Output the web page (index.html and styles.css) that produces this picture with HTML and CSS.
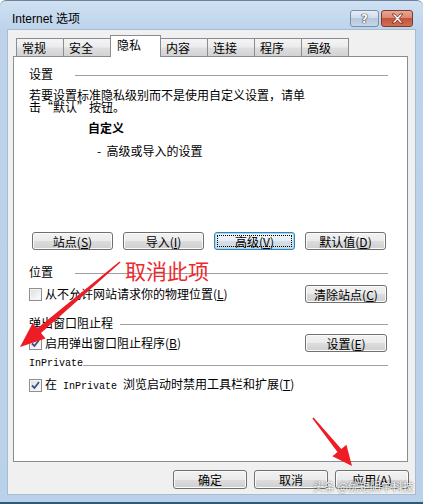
FILE: index.html
```html
<!DOCTYPE html>
<html lang="zh-CN">
<head>
<meta charset="UTF-8">
<meta name="viewport" content="width=device-width, initial-scale=1.0">
<title>Internet 选项</title>
<link rel="stylesheet" href="styles.css">
</head>
<body>
<div class="window">
  <div class="titlebar">
    <span class="title">Internet 选项</span>
    <div class="caption">
      <span class="cap-btn help">?</span>
      <span class="cap-btn close">
        <svg width="13" height="11" viewBox="0 0 13 11"><path d="M1 1h3l2.5 3 2.5-3h3l-4 4.5 4 4.5h-3l-2.5-3-2.5 3h-3l4-4.5z" fill="#fff" stroke="#6b2a20" stroke-width="0.8"/></svg>
      </span>
    </div>
  </div>

  <div class="client">
    <div class="tabs">
      <div class="tab">常规</div>
      <div class="tab">安全</div>
      <div class="tab active">隐私</div>
      <div class="tab">内容</div>
      <div class="tab">连接</div>
      <div class="tab">程序</div>
      <div class="tab">高级</div>
    </div>

    <div class="panel">
      <!-- 设置 -->
      <div class="group-head first"><span>设置</span><i class="rule wide"></i></div>
      <p class="desc">若要设置标准隐私级别而不是使用自定义设置，请单<br>击<span class="fw open">“</span>默认<span class="fw shut">”</span>按钮。</p>
      <div class="level">自定义</div>
      <div class="level-note">-&nbsp; 高级或导入的设置</div>
      <div class="btn-row">
        <button class="btn">站点(<u>S</u>)</button>
        <button class="btn">导入(<u>I</u>)</button>
        <button class="btn focus">高级(<u>V</u>)</button>
        <button class="btn">默认值(<u>D</u>)</button>
      </div>

      <!-- 位置 -->
      <div class="group-head loc"><span>位置</span><i class="rule wide"></i></div>
      <div class="check-row r1">
        <label class="check"><span class="box"></span><span class="label-text">从不允许网站请求你的物理位置(<u>L</u>)</span></label>
        <button class="btn side">清除站点(<u>C</u>)</button>
      </div>

      <!-- 弹出窗口阻止程序 -->
      <div class="group-head popup"><span>弹出窗口阻止程</span><i class="rule"></i></div>
      <div class="check-row r2">
        <label class="check"><span class="box"><svg width="11" height="11" viewBox="0 0 11 11"><path d="M2 5.5l2.5 2.5 4.5-6" fill="none" stroke="#3a4f8c" stroke-width="1.8"/></svg></span><span class="label-text">启用弹出窗口阻止程序(<u>B</u>)</span></label>
        <button class="btn side">设置(<u>E</u>)</button>
      </div>

      <!-- InPrivate -->
      <div class="group-head priv"><span class="mono">InPrivate</span><i class="rule tight"></i></div>
      <div class="check-row r3">
        <label class="check"><span class="box"><svg width="11" height="11" viewBox="0 0 11 11"><path d="M2 5.5l2.5 2.5 4.5-6" fill="none" stroke="#3a4f8c" stroke-width="1.8"/></svg></span><span class="label-text">在<span class="mono"> InPrivate </span>浏览启动时禁用工具栏和扩展(<u>T</u>)</span></label>
      </div>
    </div>

    <div class="footer">
      <button class="btn wide-btn">确定</button>
      <button class="btn wide-btn">取消</button>
      <button class="btn wide-btn">应用(<u>A</u>)</button>
    </div>
  </div>
</div>

<!-- annotations drawn over the screenshot -->
<div class="callout">取消此项</div>
<svg class="arrows" width="423" height="504" viewBox="0 0 423 504">
  <polygon points="120.5,262.6 41,333.1 45.5,338.4 20,347 32.6,323.2 37.1,328.5 119.5,261.4" fill="#ee1c25"/>
  <polygon points="312.4,418.5 337.5,452.1 332.4,456.2 352,466 346.4,444.8 341.3,448.9 313.6,417.5" fill="#ee1c25"/>
</svg>
<div class="watermark">头条 @优矩阴羊科技</div>
</body>
</html>
```

FILE: styles.css
```css
* {
  box-sizing: border-box;
}
body {
  margin: 0;
  padding: 0;
  width: 423px;
  height: 504px;
  overflow: hidden;
  position: relative;
  font-family: "Noto Sans CJK SC", sans-serif;
  font-size: 12px;
  color: #000;
}
u {
  text-decoration: underline;
}
.mono {
  font-family: "Liberation Mono", monospace;
  font-size: 10px;
  white-space: pre;
}
/* full-width quote boxes, like the dialog font */
.fw {
  display: inline-block;
  width: 12px;
}
.fw.open {
  text-align: right;
}
.fw.shut {
  text-align: left;
}

/* window frame */
.window {
  width: 423px;
  height: 504px;
  display: flex;
  flex-direction: column;
  background: linear-gradient(180deg, #cfe0f2 0px, #bcd3eb 30px, #bad1ea 100%);
  border-top: 1px solid #6f8398;
  border-bottom: 2px solid #2f5a73;
  border-radius: 6px 6px 0 0;
}
.titlebar {
  height: 28px;
  display: flex;
  align-items: flex-start;
  justify-content: space-between;
  padding: 0 10px 0 12px;
}
.title {
  font-family: "Liberation Sans", "Noto Sans CJK SC", sans-serif;
  font-size: 12px;
  line-height: 16px;
  margin-top: 10px;
}
.caption {
  display: flex;
  gap: 2px;
  margin-top: 9px;
}
.cap-btn {
  height: 17px;
  display: flex;
  align-items: center;
  justify-content: center;
  border-radius: 3px;
}
.help {
  width: 29px;
  border: 1px solid #7c8ea4;
  background: linear-gradient(180deg, #e6eef7 0%, #cfdceb 45%, #b5c8dd 50%, #c6d6e8 100%);
  color: #fff;
  font-family: "DejaVu Sans", sans-serif;
  font-weight: bold;
  font-size: 12px;
  text-shadow: 0 0 1px #333, 0 0 1px #333, 0 0 1px #333;
}
.close {
  width: 32px;
  border: 1px solid #7a3a2e;
  background: linear-gradient(180deg, #eaa793 0%, #d98a72 45%, #c4523c 50%, #d36f4e 100%);
}

/* client area */
.client {
  margin: 0 7px 7px 7px;
  height: 466px;
  background: #f0f0f0;
  border: 1px solid #a8bbd0;
  display: flex;
  flex-direction: column;
}
.tabs {
  display: flex;
  align-items: flex-end;
  height: 27px;
  padding: 5px 0 0 8px;
  margin-bottom: -1px;
  position: relative;
  z-index: 1;
}
.tab {
  width: 48px;
  height: 19px;
  margin-right: -1px;
  padding-left: 5px;
  line-height: 17px;
  border: 1px solid #898c95;
  background: linear-gradient(180deg, #f4f4f4 0%, #ececec 45%, #dedede 55%, #d2d2d2 100%);
}
.tab.active {
  width: 51px;
  height: 22px;
  padding-left: 6px;
  line-height: 18px;
  background: #fff;
  border-bottom: none;
  position: relative;
  z-index: 2;
}

.panel {
  margin-left: 5px;
  width: 395px;
  height: 406px;
  background: #fff;
  border: 1px solid #898c95;
  padding: 0 19px 0 15px;
}
.group-head {
  display: flex;
  align-items: center;
  height: 16px;
  line-height: 16px;
}
.rule {
  flex: 1;
  height: 1px;
  margin-top: 2px;
  margin-left: 7px;
  background: #a0a0a0;
}
.rule.wide {
  margin-left: 22px;
}
.rule.tight {
  margin-left: 0;
}
.group-head.first { margin-top: 9px; }
.group-head.loc { margin-top: 14px; }
.group-head.popup { margin-top: 12px; }
.group-head.priv { margin-top: 4px; }

.desc {
  margin: 7px 0 0 0;
  line-height: 12px;
}
.level {
  margin: 7px 0 0 59px;
  line-height: 16px;
  font-weight: bold;
}
.level-note {
  margin: 7px 0 0 68px;
  line-height: 16px;
}

/* buttons */
.btn {
  font-family: inherit;
  font-size: 12px;
  color: #000;
  width: 81px;
  height: 18px;
  padding: 0;
  line-height: 15px;
  border: 1px solid #707070;
  border-radius: 3px;
  background: linear-gradient(180deg, #f2f2f2 0%, #ebebeb 50%, #dddddd 50%, #cfcfcf 100%);
  box-shadow: inset 0 0 0 1px #fbfbfb;
  position: relative;
}
.btn.focus {
  border-color: #3c7fb1;
  box-shadow: inset 0 0 0 1px #9fdcf7;
  background: linear-gradient(180deg, #f0f6fa 0%, #e6eef4 50%, #d6e0e8 50%, #cdd8e0 100%);
}
.btn.focus::after {
  content: "";
  position: absolute;
  top: 2px;
  left: 2px;
  right: 2px;
  bottom: 2px;
  border: 1px dotted #000;
}
.btn-row {
  display: flex;
  gap: 10px;
  margin: 73px 0 0 3px;
}
.btn.side {
  width: 82px;
  margin-right: 1px;
}
.btn.wide-btn {
  width: 74px;
  height: 19px;
}

/* checkbox rows */
.check-row {
  height: 18px;
  display: flex;
  align-items: center;
  justify-content: space-between;
}
.check-row.r1 { margin-top: 5px; }
.check-row.r2 { margin-top: 3px; }
.check-row.r3 { margin-top: 4px; }
.check {
  display: flex;
  align-items: center;
  line-height: 16px;
}
.label-text {
  white-space: nowrap;
}
.box {
  width: 13px;
  height: 13px;
  margin-right: 3px;
  border: 1px solid #8f8f8f;
  background: linear-gradient(135deg, #dcdcdc 0%, #f4f4f4 70%, #fff 100%);
  box-shadow: inset 0 0 0 1px #f4f4f4;
  display: flex;
  align-items: center;
  justify-content: center;
}

.footer {
  display: flex;
  justify-content: flex-end;
  gap: 7px;
  padding: 8px 6px 0 0;
}

/* annotations */
.callout {
  position: absolute;
  left: 125px;
  top: 256px;
  font-size: 21px;
  line-height: 28px;
  color: #ee2a2e;
}
.arrows {
  position: absolute;
  left: 0;
  top: 0;
  pointer-events: none;
}
.watermark {
  position: absolute;
  left: 313px;
  top: 479px;
  font-size: 11px;
  line-height: 15px;
  color: rgba(255, 255, 255, 0.92);
  text-shadow: 0 0 2px rgba(0, 0, 0, 0.7);
}
```
